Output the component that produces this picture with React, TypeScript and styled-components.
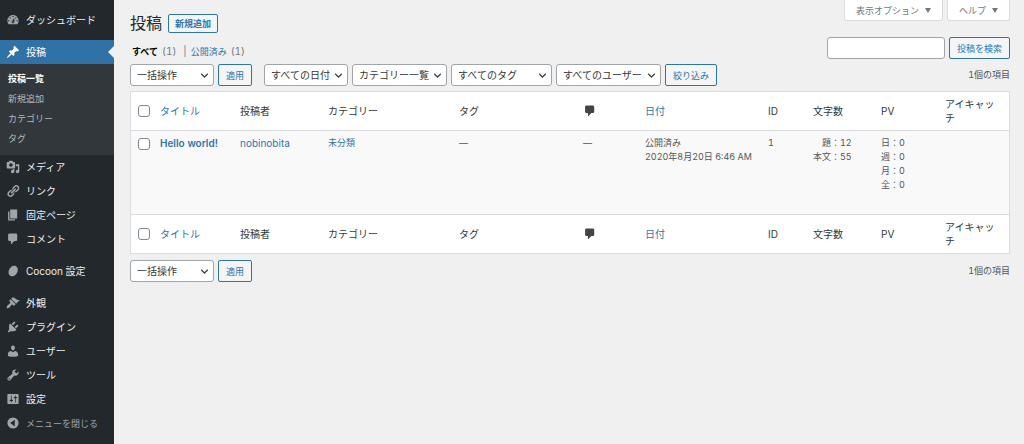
import React from 'react';
import styled, { createGlobalStyle } from 'styled-components';

const color = {
  link: '#2e74ab',
  blue: '#3072a6',
  text: '#32373c',
  cell: '#555555',
  page: '#f0f0f0',
  line: '#dcdcde',
  field: '#a0a5aa',
};

const GlobalStyle = createGlobalStyle`
  *, *::before, *::after { box-sizing: border-box; }
  body {
    margin: 0;
    background: ${color.page};
    color: ${color.text};
    font-family: Inter, "Noto Sans CJK JP", sans-serif;
    font-size: 10px;
    font-variant-numeric: tabular-nums;
    line-height: 14px;
  }
  button, input, select { font-family: inherit; margin: 0; }
  ul { list-style: none; margin: 0; padding: 0; }
`;

const Page = styled.div`
  display: flex;
  min-height: 100vh;
`;

/* ---------- Sidebar ---------- */

const Sidebar = styled.nav`
  flex: 0 0 114px;
  padding-top: 8px;
  background: #23282d;
`;

const MenuItem = styled.li<{ $gap?: boolean }>`
  margin-top: ${(p) => (p.$gap ? '8px' : '0')};
`;

const MenuLink = styled.a<{ $active?: boolean }>`
  position: relative;
  display: flex;
  align-items: center;
  height: 24px;
  color: ${(p) => (p.$active ? '#ffffff' : '#eeeeee')};
  background: ${(p) => (p.$active ? color.blue : 'transparent')};
  text-decoration: none;
  white-space: nowrap;

  svg { color: ${(p) => (p.$active ? '#ffffff' : '#a0a5aa')}; }

  &::after {
    content: '';
    display: ${(p) => (p.$active ? 'block' : 'none')};
    position: absolute;
    top: 6px;
    right: 0;
    border: 6px solid transparent;
    border-left-width: 0;
    border-right-color: ${color.page};
  }
`;

const IconSlot = styled.span`
  display: flex;
  justify-content: center;
  flex: 0 0 26px;
`;

const Glyph = styled.svg`
  display: block;
  width: 14px;
  height: 14px;
  fill: currentColor;
`;

const Submenu = styled.ul`
  padding: 5px 0 6px 8px;
  background: #32373c;
`;

const SubLink = styled.a<{ $current?: boolean }>`
  display: block;
  color: ${(p) => (p.$current ? '#ffffff' : '#b4b9be')};
  font-size: 9px;
  font-weight: ${(p) => (p.$current ? 700 : 400)};
  line-height: 20px;
  text-decoration: none;
`;

const CollapseButton = styled.button`
  display: flex;
  align-items: center;
  width: 100%;
  height: 24px;
  padding: 0;
  border: 0;
  background: none;
  color: #a0a5aa;
  font-size: 9px;
  white-space: nowrap;
`;

/* ---------- Content ---------- */

const Main = styled.main`
  flex: 1;
  min-width: 0;
  padding: 0 14px 16px 16px;
`;

const TopRow = styled.header`
  display: flex;
  justify-content: space-between;
  align-items: flex-start;
  height: 37px;
`;

const TitleGroup = styled.div`
  display: flex;
  align-items: center;
  gap: 6px;
  padding-top: 12px;
`;

const Heading = styled.h1`
  margin: 0;
  color: #23282d;
  font-size: 16px;
  font-weight: 400;
  line-height: 22px;
`;

const AddLink = styled.a`
  padding: 0 6px;
  border: 1px solid ${color.link};
  border-radius: 2px;
  background: #f3f5f6;
  color: ${color.link};
  font-size: 9px;
  font-weight: 700;
  line-height: 17px;
  text-decoration: none;
`;

const Tabs = styled.div`
  display: flex;
  gap: 4px;
`;

const TabButton = styled.button`
  display: flex;
  align-items: center;
  gap: 6px;
  height: 21px;
  padding: 0 11px;
  border: 1px solid ${color.line};
  border-top: 0;
  border-radius: 0 0 3px 3px;
  background: #ffffff;
  color: #72777c;
  font-size: 9px;

  svg { width: 6px; height: 5px; fill: currentColor; }
`;

const Row = styled.div`
  display: flex;
  justify-content: space-between;
  align-items: center;
`;

const ViewList = styled.ul`
  display: flex;
  align-items: center;
  padding: 6px 0 0 2px;
  color: #72777c;
  font-size: 10px;
`;

const ViewLink = styled.a<{ $current?: boolean }>`
  margin-right: 4px;
  color: ${(p) => (p.$current ? '#000000' : color.link)};
  font-size: 9px;
  font-weight: ${(p) => (p.$current ? 700 : 400)};
  text-decoration: none;
`;

const Divider = styled.span`
  padding: 0 4px 0 7px;
`;

const Controls = styled.div`
  display: flex;
  align-items: center;
  gap: 4px;
`;

const SearchInput = styled.input`
  width: 118px;
  height: 22px;
  padding: 0 6px;
  border: 1px solid ${color.field};
  border-radius: 3px;
  background: #ffffff;
  font-size: 10px;
`;

const Button = styled.button`
  height: 22px;
  padding: 0 7px;
  border: 1px solid ${color.link};
  border-radius: 2px;
  background: #f3f5f6;
  color: ${color.link};
  font-size: 9px;
  white-space: nowrap;
`;

const TableNav = styled(Row)`
  padding: 5px 0;
`;

const FootNav = styled(TableNav)`
  padding-top: 6px;
`;

const FilterGroups = styled.div`
  display: flex;
  gap: 12px;
`;

const SelectBox = styled.span<{ $width: number }>`
  position: relative;
  display: block;
  width: ${(p) => p.$width}px;

  svg {
    position: absolute;
    top: 8px;
    right: 5px;
    width: 9px;
    height: 7px;
    pointer-events: none;
  }
`;

const Select = styled.select`
  appearance: none;
  display: block;
  width: 100%;
  height: 22px;
  padding: 0 16px 0 6px;
  border: 1px solid ${color.field};
  border-radius: 3px;
  background: #ffffff;
  color: ${color.text};
  font-size: 10px;
`;

const Count = styled.span`
  color: ${color.cell};
  font-size: 9px;
`;

const Table = styled.table`
  width: 100%;
  table-layout: fixed;
  border: 1px solid ${color.line};
  border-spacing: 0;
  background: #ffffff;
`;

const Th = styled.th`
  height: 39px;
  padding: 0 6px;
  font-weight: 400;
  text-align: left;
  vertical-align: middle;

  thead & { border-bottom: 1px solid ${color.line}; }
  tfoot & { border-top: 1px solid ${color.line}; }
`;

const Td = styled.td`
  height: 83px;
  padding: 5px 6px;
  background: #f9f9f9;
  color: ${color.cell};
  font-size: 9px;
  vertical-align: top;
`;

const CellLink = styled.a<{ $strong?: boolean }>`
  color: ${color.link};
  font-size: ${(p) => (p.$strong ? '10px' : 'inherit')};
  font-weight: ${(p) => (p.$strong ? 600 : 400)};
  text-decoration: none;
`;

const AuthorLink = styled(CellLink)`
  font-size: 10px;
`;

const Check = styled.input`
  appearance: none;
  display: block;
  width: 12px;
  height: 12px;
  margin: 0 0 0 1px;
  border: 1px solid #7e8993;
  border-radius: 3px;
  background: #ffffff;

  td & { margin-top: 2px; }
`;

const RightLines = styled.div`
  display: inline-block;
  text-align: right;
  white-space: nowrap;
`;

const BubbleGlyph = styled(Glyph)`
  color: #444444;
`;

/* ---------- Icons ---------- */

const paths = {
  dashboard:
    'M3.76 16h12.48c1.1-1.37 1.76-3.11 1.76-5 0-4.42-3.58-8-8-8s-8 3.58-8 8c0 1.89.66 3.63 1.76 5zM10 4c.55 0 1 .45 1 1s-.45 1-1 1-1-.45-1-1 .45-1 1-1zM6 6c.55 0 1 .45 1 1s-.45 1-1 1-1-.45-1-1 .45-1 1-1zm8 0c.55 0 1 .45 1 1s-.45 1-1 1-1-.45-1-1 .45-1 1-1zm-5.37 5.55L12 7v6c0 1.1-.9 2-2 2s-2-.9-2-2c0-.57.24-1.08.63-1.45zM4 10c.55 0 1 .45 1 1s-.45 1-1 1-1-.45-1-1 .45-1 1-1zm12 0c.55 0 1 .45 1 1s-.45 1-1 1-1-.45-1-1 .45-1 1-1zm-5 3c0-.55-.45-1-1-1s-1 .45-1 1 .45 1 1 1 1-.45 1-1z',
  post: 'M10.44 3.02l1.82-1.82 6.36 6.35-1.83 1.82c-1.05-.68-2.48-.57-3.41.36l-.75.75c-.92.93-1.04 2.35-.35 3.41l-1.83 1.82-2.41-2.41-2.8 2.79c-.42.42-3.38 2.71-3.8 2.29s1.86-3.39 2.28-3.81l2.79-2.79L4.1 9.36l1.83-1.82c1.05.69 2.48.57 3.4-.36l.75-.75c.93-.92 1.05-2.35.36-3.41z',
  media:
    'M13 11V4c0-.55-.45-1-1-1h-1.67L9 1H5L3.67 3H2c-.55 0-1 .45-1 1v7c0 .55.45 1 1 1h10c.55 0 1-.45 1-1zM7 4.5c1.38 0 2.5 1.12 2.5 2.5S8.38 9.5 7 9.5 4.5 8.38 4.5 7 5.62 4.5 7 4.5zM14 6h5v10.5c0 1.38-1.12 2.5-2.5 2.5S14 17.88 14 16.5s1.12-2.5 2.5-2.5c.17 0 .34.02.5.05V9h-3V6zm-4 8.05V13h2v3.5c0 1.38-1.12 2.5-2.5 2.5S7 17.88 7 16.5 8.12 14 9.5 14c.17 0 .34.02.5.05z',
  link: 'M17.74 2.76c1.68 1.69 1.68 4.41 0 6.1l-1.53 1.52c-1.12 1.12-2.7 1.47-4.14 1.09l2.62-2.61.76-.77.76-.76c.84-.84.84-2.2 0-3.04-.84-.85-2.2-.85-3.04 0l-.77.76-3.38 3.38c-.37-1.44-.02-3.02 1.1-4.14l1.52-1.53c1.69-1.68 4.42-1.68 6.1 0zM8.59 13.43l5.34-5.34c.42-.42.42-1.1 0-1.52-.44-.43-1.13-.39-1.53 0l-5.33 5.34c-.42.42-.42 1.1 0 1.52.44.43 1.13.39 1.52 0zm-.76 2.29l4.14-4.15c.38 1.44.03 3.02-1.09 4.14l-1.52 1.53c-1.69 1.68-4.41 1.68-6.1 0-1.68-1.68-1.68-4.42 0-6.1l1.53-1.52c1.12-1.12 2.7-1.47 4.14-1.1l-4.14 4.15c-.85.84-.85 2.2 0 3.05.84.84 2.2.84 3.04 0z',
  page: 'M6 15V2h10v13H6zm-1 1h8v2H3V5h2v11z',
  comment: 'M5 2h9c1.1 0 2 .9 2 2v7c0 1.1-.9 2-2 2h-2l-5 5v-5H5c-1.1 0-2-.9-2-2V4c0-1.1.9-2 2-2z',
  cocoon: 'M13.2 2.6c3.4 1.2 4.6 4.9 3.1 8.9-1.6 4.2-5.3 6.9-8.9 5.900C3.900 16.400 2.700 12.700 4.200 8.600 5.700 4.400 9.700 1.400 13.200 2.600z',
  appearance:
    'M14.48 11.06L7.41 3.99l1.5-1.5c.5-.56 2.3-.47 3.51.32 1.21.8 1.43 1.28 2.91 2.1 1.18.64 2.45 1.26 4.45.85zm-.71.71L6.7 4.7 4.93 6.47c-.39.39-.39 1.02 0 1.41l1.06 1.06c.39.39.39 1.03 0 1.42-.6.6-1.43 1.11-2.21 1.69-.35.26-.7.53-1.01.84C1.43 14.23.4 16.08 1.4 17.07c.99 1 2.84-.03 4.18-1.36.31-.31.58-.66.85-1.02.57-.78 1.08-1.61 1.69-2.21.39-.39 1.02-.39 1.41 0l1.06 1.06c.39.39 1.02.39 1.41 0z',
  plugin:
    'M13.11 4.36L9.87 7.6 8 5.73l3.24-3.24c.35-.34 1.05-.2 1.56.32.52.51.66 1.21.31 1.55zm-8 1.77l.91-1.12 9.01 9.01-1.19.84c-.71.71-2.63 1.16-3.82 1.16H6.14L4.9 17.26c-.49.49-1.29.49-1.78 0s-.49-1.29 0-1.78l1.24-1.24v-4.29c0-1.19.04-3.11.75-3.82zm7.26 3.97l3.24-3.24c.34-.35 1.04-.21 1.55.31.52.51.66 1.21.31 1.55l-3.24 3.25z',
  user: 'M10 9.25c-2.27 0-2.73-3.44-2.73-3.44C7 4.02 7.82 2 9.97 2c2.16 0 2.98 2.02 2.71 3.81 0 0-.41 3.44-2.68 3.44zm0 2.57L12.72 10c2.39 0 4.52 2.33 4.52 4.53v2.49s-3.65 1.13-7.24 1.13c-3.65 0-7.24-1.13-7.24-1.13v-2.49c0-2.25 1.94-4.48 4.47-4.48z',
  tool: 'M16.68 9.77c-1.34 1.34-3.3 1.67-4.95.99l-5.41 6.52c-.99.99-2.59.99-3.58 0s-.99-2.59 0-3.57l6.52-5.42c-.68-1.65-.35-3.61.99-4.95 1.28-1.28 3.12-1.62 4.72-1.06l-2.89 2.89 2.82 2.82 2.86-2.87c.53 1.58.18 3.39-1.08 4.65zM3.81 16.21c.4.39 1.04.39 1.43 0 .4-.4.4-1.04 0-1.43-.39-.4-1.03-.4-1.43 0-.39.39-.39 1.03 0 1.43z',
  settings:
    'M18 16V4c0-.55-.45-1-1-1H3c-.55 0-1 .45-1 1v12c0 .55.45 1 1 1h14c.55 0 1-.45 1-1zM8 11h1c.55 0 1 .45 1 1s-.45 1-1 1H8v1.5c0 .28-.22.5-.5.5s-.5-.22-.5-.5V13H6c-.55 0-1-.45-1-1s.45-1 1-1h1V5.5c0-.28.22-.5.5-.5s.5.22.5.5V11zm5-2h-1c-.55 0-1-.45-1-1s.45-1 1-1h1V5.5c0-.28.22-.5.5-.5s.5.22.5.5V7h1c.55 0 1 .45 1 1s-.45 1-1 1h-1v5.5c0 .28-.22.5-.5.5s-.5-.22-.5-.5V9z',
  collapse: 'M10 2a8 8 0 1 0 0 16 8 8 0 0 0 0-16zM12.5 5.5v9L6 10z',
};

type IconName = keyof typeof paths;

const Icon = ({ name }: { name: IconName }) => (
  <IconSlot>
    <Glyph viewBox="0 0 20 20" aria-hidden="true">
      <path fillRule="evenodd" d={paths[name]} />
    </Glyph>
  </IconSlot>
);

const Triangle = () => (
  <svg viewBox="0 0 6 5" aria-hidden="true">
    <path d="M0 0h6L3 5z" />
  </svg>
);

/* ---------- Composed parts ---------- */

type MenuEntry = { icon: IconName; label: string; gap?: boolean; children?: string[] };

const menu: MenuEntry[] = [
  { icon: 'dashboard', label: 'ダッシュボード' },
  { icon: 'post', label: '投稿', gap: true, children: ['投稿一覧', '新規追加', 'カテゴリー', 'タグ'] },
  { icon: 'media', label: 'メディア' },
  { icon: 'link', label: 'リンク' },
  { icon: 'page', label: '固定ページ' },
  { icon: 'comment', label: 'コメント' },
  { icon: 'cocoon', label: 'Cocoon 設定', gap: true },
  { icon: 'appearance', label: '外観', gap: true },
  { icon: 'plugin', label: 'プラグイン' },
  { icon: 'user', label: 'ユーザー' },
  { icon: 'tool', label: 'ツール' },
  { icon: 'settings', label: '設定' },
];

const Dropdown = ({ label, name, width }: { label: string; name: string; width: number }) => (
  <SelectBox $width={width}>
    <Select aria-label={name}>
      <option>{label}</option>
    </Select>
    <svg viewBox="0 0 9 7" aria-hidden="true">
      <path d="M1.2 1.7l3.3 3.3 3.3-3.3" fill="none" stroke="#444" strokeWidth="1.3" />
    </svg>
  </SelectBox>
);

const BulkActions = () => (
  <Controls>
    <Dropdown label="一括操作" name="一括操作を選択" width={84} />
    <Button type="button">適用</Button>
  </Controls>
);

const HeadingCells = () => (
  <tr>
    <Th><Check type="checkbox" aria-label="すべて選択" /></Th>
    <Th scope="col"><CellLink href="#title">タイトル</CellLink></Th>
    <Th scope="col">投稿者</Th>
    <Th scope="col">カテゴリー</Th>
    <Th scope="col">タグ</Th>
    <Th scope="col" aria-label="コメント">
      <BubbleGlyph viewBox="0 0 20 20" aria-hidden="true"><path d={paths.comment} /></BubbleGlyph>
    </Th>
    <Th scope="col"><CellLink href="#date">日付</CellLink></Th>
    <Th scope="col">ID</Th>
    <Th scope="col">文字数</Th>
    <Th scope="col">PV</Th>
    <Th scope="col">アイキャッチ</Th>
  </tr>
);

const columns = [23, 80, 88, 131, 124, 62, 123, 45, 68, 64, 70];

export default function App() {
  return (
    <Page>
      <GlobalStyle />
      <Sidebar>
        <ul>
          {menu.map((item) => (
            <MenuItem key={item.label} $gap={item.gap}>
              <MenuLink href="#menu" $active={!!item.children}>
                <Icon name={item.icon} />
                {item.label}
              </MenuLink>
              {item.children && (
                <Submenu>
                  {item.children.map((child, i) => (
                    <li key={child}>
                      <SubLink href="#submenu" $current={i === 0}>{child}</SubLink>
                    </li>
                  ))}
                </Submenu>
              )}
            </MenuItem>
          ))}
          <li>
            <CollapseButton type="button">
              <Icon name="collapse" />
              メニューを閉じる
            </CollapseButton>
          </li>
        </ul>
      </Sidebar>

      <Main>
        <TopRow>
          <TitleGroup>
            <Heading>投稿</Heading>
            <AddLink href="#new">新規追加</AddLink>
          </TitleGroup>
          <Tabs>
            <TabButton type="button">表示オプション<Triangle /></TabButton>
            <TabButton type="button">ヘルプ<Triangle /></TabButton>
          </Tabs>
        </TopRow>

        <Row>
          <ViewList>
            <li>
              <ViewLink href="#all" $current>すべて</ViewLink>(1)
              <Divider>|</Divider>
            </li>
            <li><ViewLink href="#published">公開済み</ViewLink>(1)</li>
          </ViewList>
          <Controls>
            <SearchInput type="search" aria-label="投稿を検索" />
            <Button type="button">投稿を検索</Button>
          </Controls>
        </Row>

        <TableNav>
          <FilterGroups>
            <BulkActions />
            <Controls>
              <Dropdown label="すべての日付" name="日付で絞り込む" width={84} />
              <Dropdown label="カテゴリー一覧" name="カテゴリーで絞り込む" width={95} />
              <Dropdown label="すべてのタグ" name="タグで絞り込む" width={101} />
              <Dropdown label="すべてのユーザー" name="ユーザーで絞り込む" width={105} />
              <Button type="button">絞り込み</Button>
            </Controls>
          </FilterGroups>
          <Count>1個の項目</Count>
        </TableNav>

        <Table>
          <colgroup>
            {columns.map((width, i) => (
              <col key={i} width={width} />
            ))}
          </colgroup>
          <thead><HeadingCells /></thead>
          <tbody>
            <tr>
              <Td><Check type="checkbox" aria-label="Hello world!を選択" /></Td>
              <Td><CellLink href="#post" $strong>Hello world!</CellLink></Td>
              <Td><AuthorLink href="#author">nobinobita</AuthorLink></Td>
              <Td><CellLink href="#category">未分類</CellLink></Td>
              <Td>—</Td>
              <Td>—</Td>
              <Td>公開済み<br />2020年8月20日 6:46 AM</Td>
              <Td>1</Td>
              <Td>
                <RightLines>題：12<br />本文：55</RightLines>
              </Td>
              <Td>日：0<br />週：0<br />月：0<br />全：0</Td>
              <Td />
            </tr>
          </tbody>
          <tfoot><HeadingCells /></tfoot>
        </Table>

        <FootNav>
          <BulkActions />
          <Count>1個の項目</Count>
        </FootNav>
      </Main>
    </Page>
  );
}
